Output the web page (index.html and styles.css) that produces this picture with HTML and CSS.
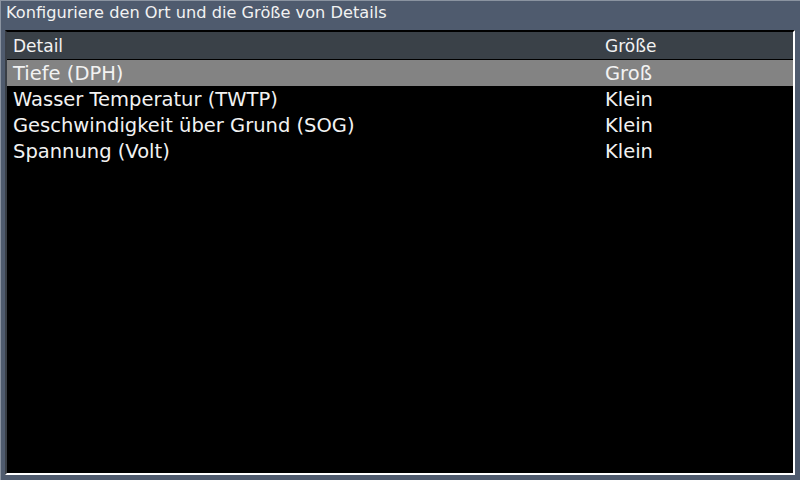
FILE: index.html
```html
<!DOCTYPE html>
<html>
<head>
<meta charset="utf-8">
<link rel="stylesheet" href="styles.css">
</head>
<body>
<div class="screen">
  <div class="title">Konfiguriere den Ort und die Größe von Details</div>
  <div class="panel">
    <div class="row head"><span class="c1">Detail</span><span class="c2">Größe</span></div>
    <div class="row sel"><span class="c1">Tiefe (DPH)</span><span class="c2">Groß</span></div>
    <div class="row"><span class="c1">Wasser Temperatur (TWTP)</span><span class="c2">Klein</span></div>
    <div class="row"><span class="c1">Geschwindigkeit über Grund (SOG)</span><span class="c2">Klein</span></div>
    <div class="row"><span class="c1">Spannung (Volt)</span><span class="c2">Klein</span></div>
  </div>
  <div class="strip"></div>
</div>
</body>
</html>
```
FILE: styles.css
```css
html, body { margin: 0; padding: 0; }
body { width: 800px; height: 480px; overflow: hidden; background: #4f5b6e; }
.screen {
  width: 800px; height: 480px; box-sizing: border-box;
  display: flex; flex-direction: column;
  border-top: 1px solid #8a93a0; border-left: 1px solid #8a93a0;
  font-family: "DejaVu Sans", Verdana, sans-serif; color: #f2f2f2;
}
.title {
  height: 29px; box-sizing: border-box;
  padding: 2px 0 0 5px; font-size: 16.2px;
}
.panel {
  flex: 1; margin: 0 5px 0 4px; background: #000;
  border-top: 2px solid #000; border-left: 2px solid #3a3f46;
  border-right: 2px solid #fff; border-bottom: 2px solid #fff;
  display: flex; flex-direction: column;
}
.row {
  height: 26px; display: flex; align-items: center;
  font-size: 19.5px;
}
.row.head { height: 27px; background: #3a4148; border-bottom: 1px solid #000; font-size: 17px; }
.row.sel { background: #838383; }
.c1 { width: 592px; padding-left: 6px; }
.c2 { flex: 1; }
.strip { height: 5px; margin-top: 0; }
```
